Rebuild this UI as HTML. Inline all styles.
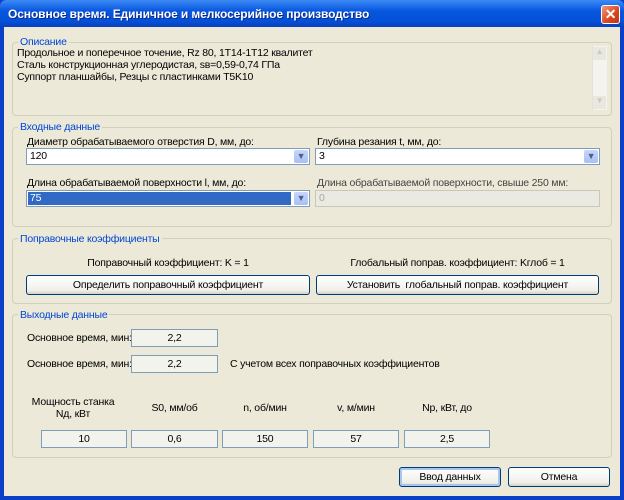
<!DOCTYPE html>
<html><head><meta charset="utf-8"><style>
*{box-sizing:border-box;margin:0;padding:0}
body{width:624px;height:500px;overflow:hidden;background:#0a3fc8;font-family:"Liberation Sans",sans-serif;font-size:10.5px;letter-spacing:-0.2px;color:#000;position:relative}
.a{position:absolute}
#tb{left:0;top:0;width:624px;height:27px;background:linear-gradient(#3d8bf5,#0857e0 40%,#0450d6 80%,#0a3fbd);border-radius:6px 6px 0 0}
#tt{left:8px;top:7px;color:#fff;font-weight:bold;font-size:12px;letter-spacing:-0.1px;text-shadow:1px 1px #0a2a8a}
#cl{left:601px;top:5px;width:19px;height:19px;background:linear-gradient(135deg,#f09a7a,#d8461c 60%,#c0361a);border:1px solid #fff;border-radius:3px;color:#fff;font-weight:bold;font-size:14px;text-align:center;line-height:16px}
#bd{left:4px;top:27px;width:616px;height:469px;background:#ece9d8}
.g{position:absolute;border:1px solid #d0d0bf;border-radius:4px}
.lg{position:absolute;background:#ece9d8;color:#0046d5;padding:0 2px;line-height:12px}
.t{position:absolute;white-space:nowrap;line-height:13px}
.cb{position:absolute;background:#fff;border:1px solid #7f9db9;height:17px;padding-left:3px;line-height:15px}
.ar{position:absolute;right:1px;top:1px;width:14px;height:13px;background:linear-gradient(#c6d6fc,#a8c0f4);border-radius:2px;color:#4d6185;font-size:9px;text-align:center;line-height:13px}
.bt{position:absolute;height:20px;border:1px solid #003c74;border-radius:3px;background:linear-gradient(#fff,#f0f0ea 80%,#d6d0c5);text-align:center;line-height:18px}
.ob{position:absolute;height:18px;border:1px solid #7f9db9;background:#f3f3ee;text-align:center;line-height:16px}
</style></head><body>
<div class="a" id="tb"></div>
<div class="a" id="tt">Основное время. Единичное и мелкосерийное производство</div>
<div class="a" id="cl">✕</div>
<div class="a" id="bd"></div>

<div class="g" style="left:12px;top:42px;width:600px;height:74px"></div>
<div class="lg" style="left:18px;top:36px">Описание</div>
<div class="t" style="left:17px;top:47px">Продольное и поперечное точение, Rz 80, 1T14-1T12 квалитет</div>
<div class="t" style="left:17px;top:59px">Сталь конструкционная углеродистая, sв=0,59-0,74 ГПа</div>
<div class="t" style="left:17px;top:71px">Суппорт планшайбы, Резцы с пластинками T5K10</div>
<div class="a" style="left:592px;top:46px;width:15px;height:64px;background:#f4f3ee;border-left:1px solid #e4e2d8"></div>
<div class="a" style="left:593px;top:47px;width:13px;height:13px;background:#e8e7e0;color:#c8c8c0;font-size:8px;text-align:center">▲</div>
<div class="a" style="left:593px;top:96px;width:13px;height:13px;background:#e8e7e0;color:#c8c8c0;font-size:8px;text-align:center">▼</div>

<div class="g" style="left:12px;top:127px;width:600px;height:100px"></div>
<div class="lg" style="left:18px;top:121px">Входные данные</div>
<div class="t" style="left:27px;top:136px">Диаметр обрабатываемого отверстия D, мм, до:</div>
<div class="cb" style="left:26px;top:148px;width:284px">120<div class="ar">▼</div></div>
<div class="t" style="left:317px;top:136px">Глубина резания t, мм, до:</div>
<div class="cb" style="left:315px;top:148px;width:285px">3<div class="ar">▼</div></div>
<div class="t" style="left:27px;top:177px">Длина обрабатываемой поверхности l, мм, до:</div>
<div class="cb" style="left:26px;top:190px;width:284px;background:#fff"><div class="a" style="left:1px;top:1px;width:263px;height:13px;background:#316ac5;color:#fff;line-height:13px;padding-left:2px">75</div><div class="ar">▼</div></div>
<div class="t" style="left:317px;top:177px;color:#444">Длина обрабатываемой поверхности, свыше 250 мм:</div>
<div class="cb" style="left:315px;top:190px;width:285px;background:#ebeae2;border-color:#c9c7ba;color:#aca899">0</div>

<div class="g" style="left:12px;top:238px;width:600px;height:66px"></div>
<div class="lg" style="left:18px;top:233px">Поправочные коэффициенты</div>
<div class="t" style="left:26px;top:257px;width:284px;text-align:center">Поправочный коэффициент: K = 1</div>
<div class="t" style="left:316px;top:257px;width:283px;text-align:center">Глобальный поправ. коэффициент: Kглоб = 1</div>
<div class="bt" style="left:26px;top:275px;width:284px">Определить поправочный коэффициент</div>
<div class="bt" style="left:316px;top:275px;width:283px">Установить&nbsp; глобальный поправ. коэффициент</div>

<div class="g" style="left:12px;top:314px;width:600px;height:144px"></div>
<div class="lg" style="left:18px;top:309px">Выходные данные</div>
<div class="t" style="left:27px;top:332px">Основное время, мин:</div>
<div class="ob" style="left:131px;top:329px;width:87px">2,2</div>
<div class="t" style="left:27px;top:358px">Основное время, мин:</div>
<div class="ob" style="left:131px;top:355px;width:87px">2,2</div>
<div class="t" style="left:230px;top:358px">С учетом всех поправочных коэффициентов</div>
<div class="t" style="left:30px;top:396px;width:86px;text-align:center;line-height:12px">Мощность станка<br>Nд, кВт</div>
<div class="t" style="left:131px;top:402px;width:87px;text-align:center">S0, мм/об</div>
<div class="t" style="left:222px;top:402px;width:86px;text-align:center">n, об/мин</div>
<div class="t" style="left:313px;top:402px;width:86px;text-align:center">v, м/мин</div>
<div class="t" style="left:404px;top:402px;width:86px;text-align:center">Np, кВт, до</div>
<div class="ob" style="left:41px;top:430px;width:86px">10</div>
<div class="ob" style="left:131px;top:430px;width:87px">0,6</div>
<div class="ob" style="left:222px;top:430px;width:86px">150</div>
<div class="ob" style="left:313px;top:430px;width:86px">57</div>
<div class="ob" style="left:404px;top:430px;width:86px">2,5</div>

<div class="bt" style="left:399px;top:467px;width:102px;box-shadow:inset 0 0 0 2px #a8c4f0">Ввод данных</div>
<div class="bt" style="left:508px;top:467px;width:102px">Отмена</div>
</body></html>
